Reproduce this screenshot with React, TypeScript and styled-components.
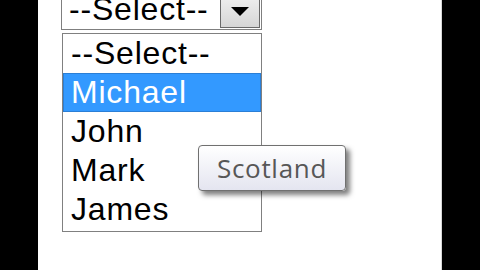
import React from "react";
import styled, { createGlobalStyle } from "styled-components";

const GlobalStyle = createGlobalStyle`
  html, body {
    margin: 0;
    padding: 0;
    background: #000;
  }
`;

const Screen = styled.div`
  width: 480px;
  height: 270px;
  overflow: hidden;
  display: flex;
  justify-content: center;
  background: #000;
`;

const Panel = styled.div`
  width: 404px;
  height: 270px;
  box-sizing: border-box;
  padding-left: 23px;
  background: #fff;
  border-right: 1px solid #d8d8d8;
  font-family: "Liberation Sans", Arial, sans-serif;
`;

const SelectBox = styled.div`
  width: 201px;
  height: 41px;
  box-sizing: border-box;
  margin-top: -11px;
  border: 1px solid #7f7f7f;
  display: flex;
  background: #fff;
`;

const SelectValue = styled.div`
  flex: 1;
  padding-left: 7px;
  font-size: 32px;
  letter-spacing: 0.8px;
  line-height: 39px;
  color: #000;
`;

const ArrowButton = styled.div`
  width: 40px;
  margin: 1px 1px 1px 0;
  box-sizing: border-box;
  border: 1px solid #6a6a6a;
  background: linear-gradient(#f3f3f3, #d6d6d6);
  display: flex;
  align-items: flex-end;
  justify-content: center;
  padding-bottom: 11px;
`;

const ListBox = styled.div`
  position: relative;
  width: 200px;
  margin: 3px 0 0 1px;
  box-sizing: border-box;
  border: 1px solid #808080;
  padding-bottom: 2px;
`;

const Option = styled.div<{ $selected?: boolean }>`
  height: 39px;
  box-sizing: border-box;
  padding-left: 7px;
  font-size: 32px;
  letter-spacing: 0.8px;
  line-height: 39px;
  color: ${(p) => (p.$selected ? "#fff" : "#000")};
  background: ${(p) => (p.$selected ? "#3399ff" : "transparent")};
  border: 1px solid ${(p) => (p.$selected ? "#2b7fd6" : "transparent")};
  display: flex;
  align-items: center;
`;

const Tooltip = styled.div`
  position: absolute;
  left: 135px;
  top: 111px;
  width: 148px;
  height: 46px;
  box-sizing: border-box;
  border: 1px solid #707070;
  border-radius: 4px;
  background: linear-gradient(#ffffff, #e4e5f0);
  box-shadow: 4px 4px 5px rgba(0, 0, 0, 0.5);
  display: flex;
  align-items: center;
  justify-content: center;
  font-family: "Open Sans", "Noto Sans", sans-serif;
  font-size: 26px;
  letter-spacing: 0.7px;
  color: #575757;
`;

const names = ["--Select--", "Michael", "John", "Mark", "James"];

export default function App() {
  return (
    <>
      <GlobalStyle />
      <Screen>
        <Panel>
          <SelectBox>
            <SelectValue>--Select--</SelectValue>
            <ArrowButton>
              <svg width="18" height="9" viewBox="0 0 18 9">
                <path d="M0 0 H18 L9 9 Z" fill="#000" />
              </svg>
            </ArrowButton>
          </SelectBox>
          <ListBox>
            {names.map((n) => (
              <Option key={n} $selected={n === "Michael"}>
                {n}
              </Option>
            ))}
            <Tooltip>Scotland</Tooltip>
          </ListBox>
        </Panel>
      </Screen>
    </>
  );
}
